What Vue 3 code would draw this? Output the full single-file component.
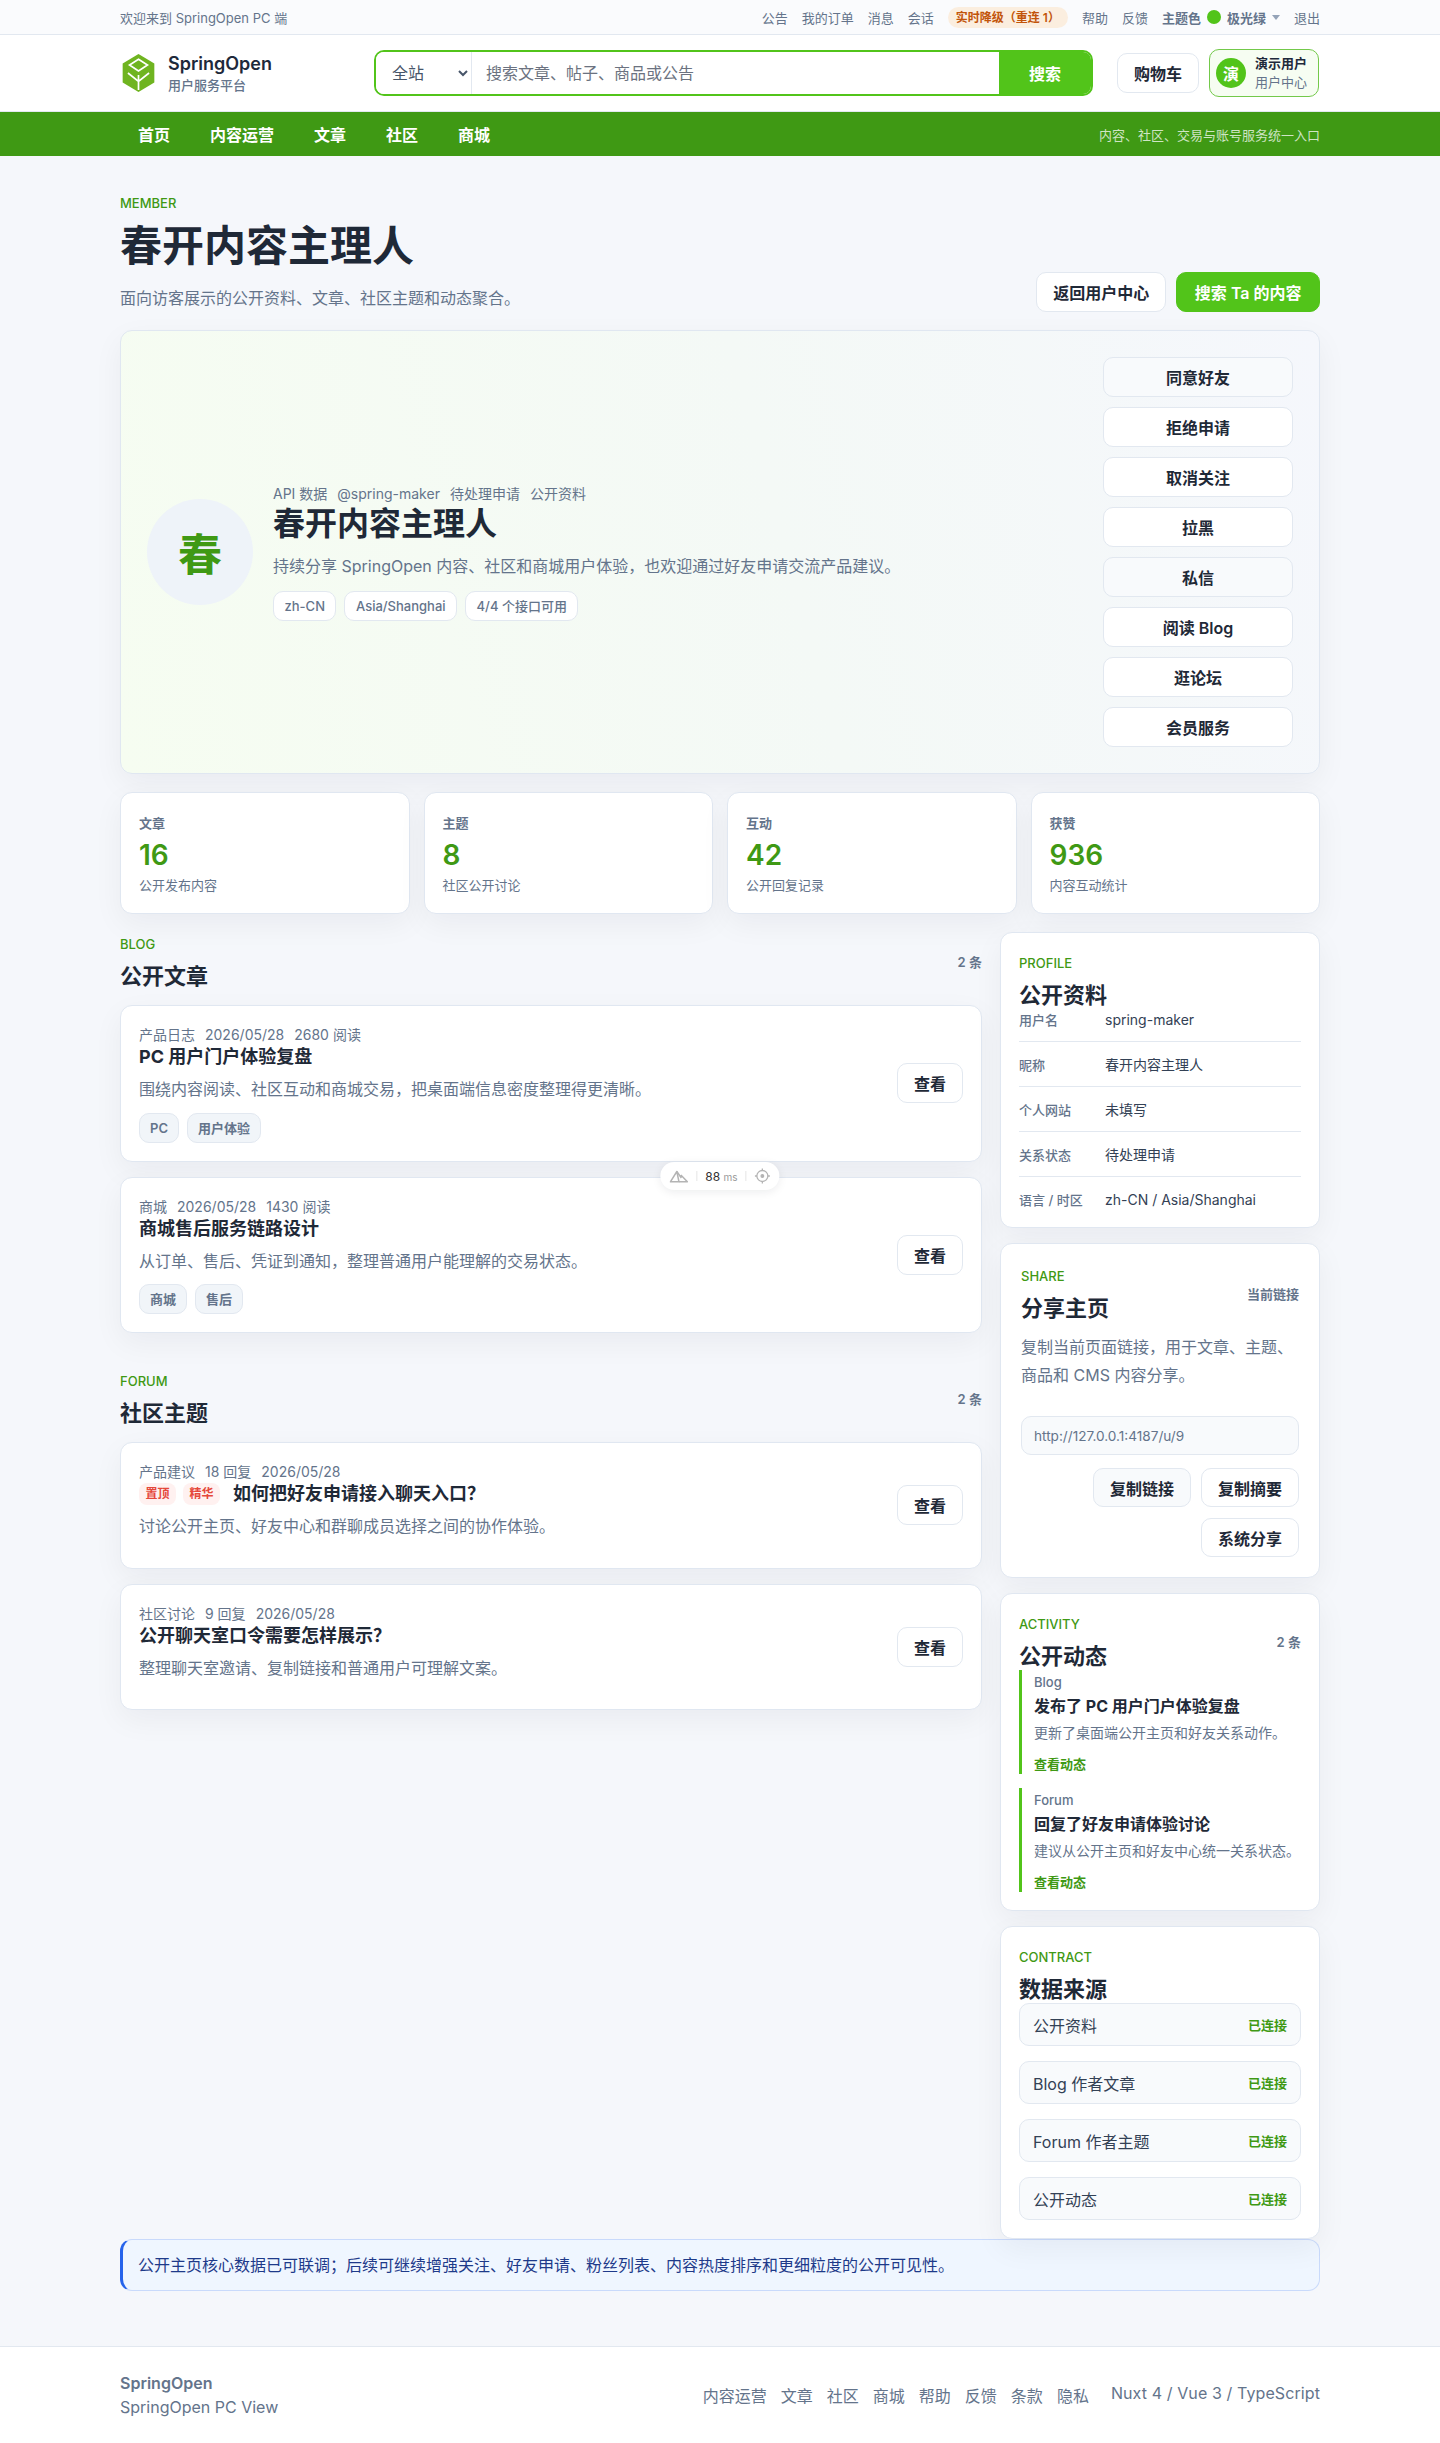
<template>
  <div class="page">
    <div class="topbar">
      <div class="wrap topbar-in">
        <span>欢迎来到 SpringOpen PC 端</span>
        <div class="top-links">
          <a>公告</a>
          <a>我的订单</a>
          <a>消息</a>
          <a>会话</a>
          <span class="status-pill">实时降级（重连 1）</span>
          <a>帮助</a>
          <a>反馈</a>
          <div class="theme">
            <b>主题色</b>
            <i class="theme-dot"></i>
            <b>极光绿</b>
            <i class="theme-arrow"></i>
          </div>
          <a>退出</a>
        </div>
      </div>
    </div>

    <header class="header">
      <div class="wrap header-in">
        <div class="brand">
          <svg width="33" height="38" viewBox="0 0 30 36">
            <polygon points="15,0 30,9 30,27 15,36 0,27 0,9" fill="#6fb420" />
            <polygon points="15,5 23.5,10.5 15,16 6.500,10.500" fill="none" stroke="#fff" stroke-width="1.600" />
            <path d="M15 20V34M5 18l10 8 10-8" fill="none" stroke="#fff" stroke-width="1.600" />
          </svg>
          <div class="brand-text">
            <strong>SpringOpen</strong>
            <span>用户服务平台</span>
          </div>
        </div>
        <form class="search" @submit.prevent>
          <select class="search-scope">
            <option>全站</option>
          </select>
          <input class="search-input" placeholder="搜索文章、帖子、商品或公告" />
          <button class="search-btn">搜索</button>
        </form>
        <button class="btn cart">购物车</button>
        <div class="user-box">
          <span class="user-avatar">演</span>
          <div class="user-text">
            <strong>演示用户</strong>
            <span>用户中心</span>
          </div>
        </div>
      </div>
    </header>

    <nav class="nav">
      <div class="wrap nav-in">
        <div class="nav-links">
          <a v-for="item in navItems" :key="item">{{ item }}</a>
        </div>
        <span class="nav-note">内容、社区、交易与账号服务统一入口</span>
      </div>
    </nav>

    <main class="wrap main">
      <div class="page-head">
        <div>
          <span class="eyebrow">MEMBER</span>
          <h1>春开内容主理人</h1>
          <p>面向访客展示的公开资料、文章、社区主题和动态聚合。</p>
        </div>
        <div class="page-actions">
          <button class="btn">返回用户中心</button>
          <button class="btn primary">搜索 Ta 的内容</button>
        </div>
      </div>

      <section class="hero card">
        <div class="hero-avatar">春</div>
        <div class="hero-body">
          <div class="meta">
            <span>API 数据</span>
            <span>@spring-maker</span>
            <span>待处理申请</span>
            <span>公开资料</span>
          </div>
          <h2>春开内容主理人</h2>
          <p>持续分享 SpringOpen 内容、社区和商城用户体验，也欢迎通过好友申请交流产品建议。</p>
          <div class="chips">
            <span>zh-CN</span>
            <span>Asia/Shanghai</span>
            <span>4/4 个接口可用</span>
          </div>
        </div>
        <div class="hero-actions">
          <button
            v-for="action in heroActions"
            :key="action.label"
            class="btn"
            :class="{ soft: action.soft }"
          >{{ action.label }}</button>
        </div>
      </section>

      <section class="stats">
        <div v-for="stat in stats" :key="stat.label" class="stat card">
          <b>{{ stat.label }}</b>
          <strong>{{ stat.value }}</strong>
          <span>{{ stat.note }}</span>
        </div>
      </section>

      <div class="columns">
        <div class="col-left">
          <section class="block">
            <div class="panel-head spaced">
              <div>
                <span class="eyebrow">BLOG</span>
                <h3>公开文章</h3>
              </div>
              <span class="count">2 条</span>
            </div>
            <div class="list">
              <article v-for="post in posts" :key="post.title" class="item card">
                <div class="item-main">
                  <div class="meta">
                    <span v-for="m in post.meta" :key="m">{{ m }}</span>
                  </div>
                  <h4>{{ post.title }}</h4>
                  <p>{{ post.desc }}</p>
                  <div class="tags">
                    <span v-for="t in post.tags" :key="t">{{ t }}</span>
                  </div>
                </div>
                <button class="btn">查看</button>
              </article>
            </div>
          </section>

          <section class="block">
            <div class="panel-head spaced">
              <div>
                <span class="eyebrow">FORUM</span>
                <h3>社区主题</h3>
              </div>
              <span class="count">2 条</span>
            </div>
            <div class="list">
              <article v-for="topic in topics" :key="topic.title" class="item card">
                <div class="item-main">
                  <div class="meta">
                    <span v-for="m in topic.meta" :key="m">{{ m }}</span>
                  </div>
                  <h4>
                    <em v-for="b in topic.badges" :key="b" class="badge">{{ b }}</em>
                    <span :class="{ 'after-badge': topic.badges.length }">{{ topic.title }}</span>
                  </h4>
                  <p>{{ topic.desc }}</p>
                </div>
                <button class="btn">查看</button>
              </article>
            </div>
          </section>
        </div>

        <aside class="col-right">
          <section class="card side">
            <div class="panel-head">
              <div>
                <span class="eyebrow">PROFILE</span>
                <h3>公开资料</h3>
              </div>
            </div>
            <div class="profile-list">
              <div v-for="row in profile" :key="row.label" class="profile-row">
                <span>{{ row.label }}</span>
                <b>{{ row.value }}</b>
              </div>
            </div>
          </section>

          <section class="card side share">
            <div class="panel-head">
              <div>
                <span class="eyebrow">SHARE</span>
                <h3>分享主页</h3>
              </div>
              <span class="count">当前链接</span>
            </div>
            <p class="share-desc">复制当前页面链接，用于文章、主题、商品和 CMS 内容分享。</p>
            <input class="share-input" readonly value="http://127.0.0.1:4187/u/9" />
            <div class="share-actions">
              <button class="btn soft">复制链接</button>
              <button class="btn">复制摘要</button>
              <button class="btn">系统分享</button>
            </div>
          </section>

          <section class="card side">
            <div class="panel-head">
              <div>
                <span class="eyebrow">ACTIVITY</span>
                <h3>公开动态</h3>
              </div>
              <span class="count wide">2 条</span>
            </div>
            <div class="timeline">
              <div v-for="act in activity" :key="act.title" class="tl-item">
                <span class="tl-kind">{{ act.kind }}</span>
                <b>{{ act.title }}</b>
                <p>{{ act.desc }}</p>
                <a>查看动态</a>
              </div>
            </div>
          </section>

          <section class="card side">
            <div class="panel-head">
              <div>
                <span class="eyebrow">CONTRACT</span>
                <h3>数据来源</h3>
              </div>
            </div>
            <div class="sources">
              <div v-for="src in sources" :key="src" class="source">
                <span>{{ src }}</span>
                <b>已连接</b>
              </div>
            </div>
          </section>
        </aside>
      </div>

      <div class="notice">公开主页核心数据已可联调；后续可继续增强关注、好友申请、粉丝列表、内容热度排序和更细粒度的公开可见性。</div>
    </main>

    <footer class="footer">
      <div class="wrap footer-in">
        <div class="footer-brand">
          <b>SpringOpen</b>
          <span>SpringOpen PC View</span>
        </div>
        <div class="footer-links">
          <a v-for="link in footerLinks" :key="link">{{ link }}</a>
          <span>Nuxt 4 / Vue 3 / TypeScript</span>
        </div>
      </div>
    </footer>

    <div class="dev-pill">
      <svg width="19" height="13" viewBox="0 0 19 13" fill="none" stroke="#b4b4b4" stroke-width="1.500" stroke-linejoin="round">
        <path d="M7.500 1.500 1 11.800h8.600L7.500 1.500Z" />
        <path d="M7.500 1.500 12 8M11.500 5l6.500 6.800H9.600" />
      </svg>
      <i></i>
      <span class="dev-num">88 <small>ms</small></span>
      <i></i>
      <svg width="16" height="16" viewBox="0 0 16 16" fill="none" stroke="#b4b4b4" stroke-width="1.300">
        <circle cx="8" cy="8" r="5.500" />
        <circle cx="8" cy="8" r="1.300" fill="#b4b4b4" />
        <path d="M8 .5v2M8 13.500v2M.5 8h2M13.500 8h2" />
      </svg>
    </div>
  </div>
</template>

<script setup>
const navItems = ['首页', '内容运营', '文章', '社区', '商城']

const heroActions = [
  { label: '同意好友', soft: true },
  { label: '拒绝申请' },
  { label: '取消关注' },
  { label: '拉黑' },
  { label: '私信', soft: true },
  { label: '阅读 Blog' },
  { label: '逛论坛' },
  { label: '会员服务' }
]

const stats = [
  { label: '文章', value: '16', note: '公开发布内容' },
  { label: '主题', value: '8', note: '社区公开讨论' },
  { label: '互动', value: '42', note: '公开回复记录' },
  { label: '获赞', value: '936', note: '内容互动统计' }
]

const posts = [
  {
    meta: ['产品日志', '2026/05/28', '2680 阅读'],
    title: 'PC 用户门户体验复盘',
    desc: '围绕内容阅读、社区互动和商城交易，把桌面端信息密度整理得更清晰。',
    tags: ['PC', '用户体验']
  },
  {
    meta: ['商城', '2026/05/28', '1430 阅读'],
    title: '商城售后服务链路设计',
    desc: '从订单、售后、凭证到通知，整理普通用户能理解的交易状态。',
    tags: ['商城', '售后']
  }
]

const topics = [
  {
    meta: ['产品建议', '18 回复', '2026/05/28'],
    badges: ['置顶', '精华'],
    title: '如何把好友申请接入聊天入口？',
    desc: '讨论公开主页、好友中心和群聊成员选择之间的协作体验。'
  },
  {
    meta: ['社区讨论', '9 回复', '2026/05/28'],
    badges: [],
    title: '公开聊天室口令需要怎样展示？',
    desc: '整理聊天室邀请、复制链接和普通用户可理解文案。'
  }
]

const profile = [
  { label: '用户名', value: 'spring-maker' },
  { label: '昵称', value: '春开内容主理人' },
  { label: '个人网站', value: '未填写' },
  { label: '关系状态', value: '待处理申请' },
  { label: '语言 / 时区', value: 'zh-CN / Asia/Shanghai' }
]

const activity = [
  { kind: 'Blog', title: '发布了 PC 用户门户体验复盘', desc: '更新了桌面端公开主页和好友关系动作。' },
  { kind: 'Forum', title: '回复了好友申请体验讨论', desc: '建议从公开主页和好友中心统一关系状态。' }
]

const sources = ['公开资料', 'Blog 作者文章', 'Forum 作者主题', '公开动态']

const footerLinks = ['内容运营', '文章', '社区', '商城', '帮助', '反馈', '条款', '隐私']
</script>

<style>
body {
  margin: 0;
  background: #f5f7fb;
}
</style>

<style scoped>
.page {
  position: relative;
  min-height: 2443px;
  font-family: Inter, "Noto Sans CJK SC", sans-serif;
  color: #1f2937;
  background: #f5f7fb;
}

.wrap {
  width: 1200px;
  margin: 0 auto;
}

h1, h2, h3, h4, p {
  margin: 0;
}

button, input, select {
  font-family: inherit;
}

.topbar {
  height: 34px;
  background: #fafbfd;
  border-bottom: 1px solid #e2e8f0;
  font-size: 13px;
  color: #64748b;
}

.topbar-in {
  display: flex;
  align-items: center;
  justify-content: space-between;
  height: 100%;
}

.top-links {
  display: flex;
  align-items: center;
  gap: 14px;
}

.status-pill {
  height: 21px;
  line-height: 21px;
  padding: 0 8px;
  border-radius: 11px;
  background: #fbeedf;
  color: #c2540a;
  font-size: 12px;
  font-weight: 600;
}

.theme {
  display: flex;
  align-items: center;
  gap: 6px;
}

.theme b {
  font-weight: 600;
  color: #64748b;
}

.theme-dot {
  width: 14px;
  height: 14px;
  border-radius: 50%;
  background: #52c41a;
}

.theme-arrow {
  width: 0;
  height: 0;
  border-left: 4px solid transparent;
  border-right: 4px solid transparent;
  border-top: 5px solid #94a3b8;
}

.header {
  height: 76px;
  background: #fff;
  border-bottom: 1px solid #e2e8f0;
}

.header-in {
  display: flex;
  align-items: center;
  height: 100%;
}

.brand {
  display: flex;
  align-items: center;
  gap: 13px;
  width: 254px;
  padding-left: 2px;
  box-sizing: border-box;
}

.brand-text {
  display: flex;
  flex-direction: column;
}

.brand-text strong {
  font-size: 18px;
  line-height: 24px;
  font-weight: 600;
  color: #1e293b;
}

.brand-text span {
  font-size: 13px;
  line-height: 18px;
  font-weight: 500;
  color: #64748b;
}

.search {
  display: flex;
  width: 719px;
  height: 46px;
  box-sizing: border-box;
  border: 2px solid #52c41a;
  border-radius: 10px;
  overflow: hidden;
  background: #fff;
}

.search-scope {
  width: 96px;
  padding-left: 12px;
  border: 0;
  border-right: 1px solid #e2e8f0;
  background: #fff;
  font-size: 16px;
  color: #475569;
  outline: none;
}

.search-input {
  flex: 1;
  min-width: 0;
  padding: 0 14px;
  border: 0;
  font-size: 16px;
  color: #1f2937;
  outline: none;
}

.search-input::placeholder {
  color: #6b7280;
}

.search-btn {
  width: 92px;
  border: 0;
  background: #52c41a;
  color: #fff;
  font-size: 16px;
  font-weight: 600;
}

.btn {
  height: 40px;
  padding: 0 16px;
  box-sizing: border-box;
  border: 1px solid #e2e8f0;
  border-radius: 10px;
  background: #fff;
  color: #1f2937;
  font-size: 16px;
  font-weight: 600;
  white-space: nowrap;
}

.btn.soft {
  background: #f8fafc;
}

.btn.primary {
  padding: 0 17.5px;
  border-color: #52c41a;
  background: #52c41a;
  color: #fff;
}

.cart {
  margin-left: 24px;
}

.user-box {
  display: flex;
  align-items: center;
  gap: 9px;
  width: 110px;
  height: 48px;
  margin-left: 10px;
  padding-left: 6px;
  box-sizing: border-box;
  border: 1px solid #73c94a;
  border-radius: 10px;
  background: #f6fdf2;
}

.user-avatar {
  display: flex;
  align-items: center;
  justify-content: center;
  width: 30px;
  height: 30px;
  flex-shrink: 0;
  border-radius: 50%;
  background: #52c41a;
  color: #fff;
  font-size: 16px;
  font-weight: 700;
}

.user-text {
  display: flex;
  flex-direction: column;
  font-size: 13px;
  line-height: 19px;
}

.user-text strong {
  font-weight: 600;
  color: #1e293b;
}

.user-text span {
  color: #64748b;
}

.nav {
  height: 44px;
  background: #3f9914;
}

.nav-in {
  display: flex;
  align-items: center;
  justify-content: space-between;
  height: 100%;
}

.nav-links {
  display: flex;
  gap: 4px;
}

.nav-links a {
  padding: 0 18px;
  color: #fff;
  font-size: 16px;
  font-weight: 700;
}

.nav-note {
  font-size: 13px;
  color: rgba(255, 255, 255, 0.75);
}

.main {
  padding: 35px 0 55px;
}

.eyebrow {
  display: block;
  font-size: 13px;
  line-height: 24px;
  font-weight: 500;
  color: #3f9914;
}

.page-head {
  display: flex;
  align-items: flex-end;
  justify-content: space-between;
}

.page-head h1 {
  margin-top: 6px;
  font-size: 42px;
  line-height: 50px;
  font-weight: 700;
  color: #1f2937;
}

.page-head p {
  margin-top: 14px;
  font-size: 16px;
  line-height: 26px;
  color: #64748b;
}

.page-actions {
  display: flex;
  gap: 10px;
  margin-bottom: -1px;
}

.card {
  box-sizing: border-box;
  border: 1px solid #e0e7f1;
  border-radius: 12px;
  background: #fff;
  box-shadow: 0 10px 30px rgba(15, 23, 42, 0.05);
}

.hero {
  display: flex;
  align-items: center;
  gap: 20px;
  margin-top: 19px;
  padding: 26px;
  background: linear-gradient(75deg, #f6fdf1 0%, #f4f9f6 55%, #f5f7fc 100%);
}

.hero-avatar {
  display: flex;
  align-items: center;
  justify-content: center;
  width: 106px;
  height: 106px;
  flex-shrink: 0;
  border-radius: 50%;
  background: #eef3f9;
  color: #3f9914;
  font-size: 44px;
  font-weight: 700;
}

.hero-body {
  flex: 1;
  min-width: 0;
}

.meta {
  display: flex;
  gap: 10px;
  font-size: 14px;
  line-height: 21px;
  color: #64748b;
}

.hero-body h2 {
  font-size: 32px;
  line-height: 40px;
  font-weight: 700;
  color: #1f2937;
}

.hero-body p {
  margin-top: 9px;
  font-size: 16px;
  line-height: 26px;
  color: #64748b;
}

.chips {
  display: flex;
  gap: 8px;
  margin-top: 12px;
}

.chips span {
  height: 30px;
  line-height: 28px;
  padding: 0 10.5px;
  box-sizing: border-box;
  border: 1px solid #e2e8f0;
  border-radius: 10px;
  background: #fff;
  font-size: 13px;
  font-weight: 500;
  color: #64748b;
}

.hero-actions {
  display: flex;
  flex-direction: column;
  gap: 10px;
  width: 190px;
  flex-shrink: 0;
}

.stats {
  display: grid;
  grid-template-columns: repeat(4, 1fr);
  gap: 14px;
  margin-top: 18px;
}

.stat {
  display: flex;
  flex-direction: column;
  padding: 18px;
}

.stat b {
  font-size: 13px;
  line-height: 24px;
  font-weight: 600;
  color: #64748b;
}

.stat strong {
  font-size: 28px;
  line-height: 40px;
  font-weight: 600;
  color: #3f9914;
}

.stat span {
  font-size: 13px;
  line-height: 20px;
  color: #64748b;
}

.columns {
  display: grid;
  grid-template-columns: minmax(0, 1fr) 320px;
  gap: 18px;
  align-items: start;
  margin-top: 18px;
}

.col-left {
  display: flex;
  flex-direction: column;
  gap: 36px;
}

.col-right {
  display: flex;
  flex-direction: column;
  gap: 15px;
}

.panel-head {
  display: flex;
  align-items: center;
  justify-content: space-between;
}

.panel-head.spaced {
  margin-bottom: 15px;
}

.panel-head h3 {
  margin-top: 6px;
  font-size: 22px;
  line-height: 28px;
  font-weight: 700;
  color: #1f2937;
}

.count {
  font-size: 13px;
  font-weight: 600;
  color: #64748b;
}

.list {
  display: flex;
  flex-direction: column;
  gap: 15px;
}

.item {
  display: flex;
  align-items: center;
  justify-content: space-between;
  gap: 18px;
  padding: 18px;
}

.item-main {
  flex: 1;
  min-width: 0;
}

.item h4 {
  display: flex;
  align-items: center;
  gap: 7px;
  font-size: 18px;
  line-height: 24px;
  font-weight: 700;
  color: #1f2937;
}

.after-badge {
  margin-left: 6px;
}

.badge {
  height: 22px;
  line-height: 22px;
  padding: 0 6.5px;
  border-radius: 8px;
  background: #fff1f0;
  color: #e5483b;
  font-size: 12px;
  font-style: normal;
  font-weight: 600;
}

.item p {
  margin: 8px 0 10px;
  font-size: 16px;
  line-height: 25.6px;
  color: #64748b;
}

.tags {
  display: flex;
  gap: 8px;
}

.tags span {
  height: 30px;
  line-height: 28px;
  padding: 0 10px;
  box-sizing: border-box;
  border: 1px solid #e2e8f0;
  border-radius: 10px;
  background: #f1f5f9;
  font-size: 13px;
  font-weight: 600;
  color: #64748b;
}

.side {
  padding: 18px;
}

.profile-list {
  margin-bottom: -2px;
}

.profile-row {
  display: flex;
  padding: 12px 0 10px;
  line-height: 22px;
  border-bottom: 1px solid #e2e8f0;
}

.profile-row:first-child {
  padding-top: 0;
}

.profile-row:last-child {
  padding-bottom: 0;
  border-bottom: 0;
}

.profile-row span {
  width: 86px;
  flex-shrink: 0;
  font-size: 13px;
  font-weight: 500;
  color: #64748b;
}

.profile-row b {
  font-size: 14px;
  font-weight: 400;
  color: #334155;
}

.share {
  padding: 20px;
}

.share-desc {
  margin-top: 11px;
  font-size: 16px;
  line-height: 28px;
  color: #64748b;
}

.share-input {
  display: block;
  width: 100%;
  height: 39px;
  margin-top: 27px;
  padding: 0 12px;
  box-sizing: border-box;
  border: 1px solid #e2e8f0;
  border-radius: 10px;
  background: #f8fafc;
  font-size: 13.6px;
  color: #64748b;
  outline: none;
}

.share-actions {
  display: flex;
  flex-wrap: wrap;
  justify-content: flex-end;
  gap: 11px 10px;
  margin-top: 13px;
}

.share-actions .btn {
  height: 39px;
}

.timeline {
  display: flex;
  flex-direction: column;
  gap: 14px;
}

.tl-item {
  display: flex;
  flex-direction: column;
  align-items: flex-start;
  padding: 2px 0 0 12px;
  border-left: 3px solid #52c41a;
}

.tl-kind {
  font-size: 13px;
  line-height: 20px;
  font-weight: 500;
  color: #64748b;
}

.tl-item b {
  margin-top: 1px;
  font-size: 16px;
  line-height: 26px;
  font-weight: 700;
  color: #1f2937;
}

.tl-item p {
  margin-top: 3px;
  font-size: 14px;
  line-height: 22px;
  color: #64748b;
  white-space: nowrap;
}

.tl-item a {
  margin-top: 10.5px;
  font-size: 13px;
  line-height: 19.5px;
  font-weight: 600;
  color: #3f9914;
}

.sources {
  display: flex;
  flex-direction: column;
  gap: 15px;
}

.source {
  display: flex;
  align-items: center;
  justify-content: space-between;
  height: 43px;
  padding: 0 13px;
  box-sizing: border-box;
  border: 1px solid #e2e8f0;
  border-radius: 10px;
  background: #f8fafc;
  font-size: 16px;
  color: #334155;
}

.source b {
  font-size: 13px;
  font-weight: 600;
  color: #3f9914;
}

.notice {
  padding: 12px 15px;
  border: 1px solid #c9dafb;
  border-left: 3px solid #2563eb;
  border-radius: 12px;
  background: #eff6ff;
  font-size: 16px;
  line-height: 26px;
  color: #1e3a8a;
}

.footer {
  height: 96px;
  background: #fff;
  border-top: 1px solid #e2e8f0;
}

.footer-in {
  display: flex;
  align-items: center;
  justify-content: space-between;
  height: 100%;
}

.footer-brand {
  display: flex;
  flex-direction: column;
  font-size: 16px;
  line-height: 24px;
  color: #64748b;
}

.footer-brand b {
  font-weight: 600;
}

.footer-links {
  display: flex;
  gap: 14px;
  font-size: 16px;
  color: #64748b;
}

.footer-links span {
  margin-left: 8px;
  letter-spacing: 0.1px;
}

.dev-pill {
  position: absolute;
  top: 1162px;
  left: 50%;
  transform: translateX(-50%);
  display: flex;
  align-items: center;
  gap: 8px;
  height: 28px;
  padding: 0 9px;
  border-radius: 14px;
  background: #fff;
  box-shadow: 0 2px 10px rgba(15, 23, 42, 0.08);
}

.dev-pill i {
  width: 1px;
  height: 10px;
  background: #e5e5e5;
}

.dev-num {
  font-size: 12px;
  color: #333;
}

.dev-num small {
  font-size: 10px;
  color: #999;
}
</style>
